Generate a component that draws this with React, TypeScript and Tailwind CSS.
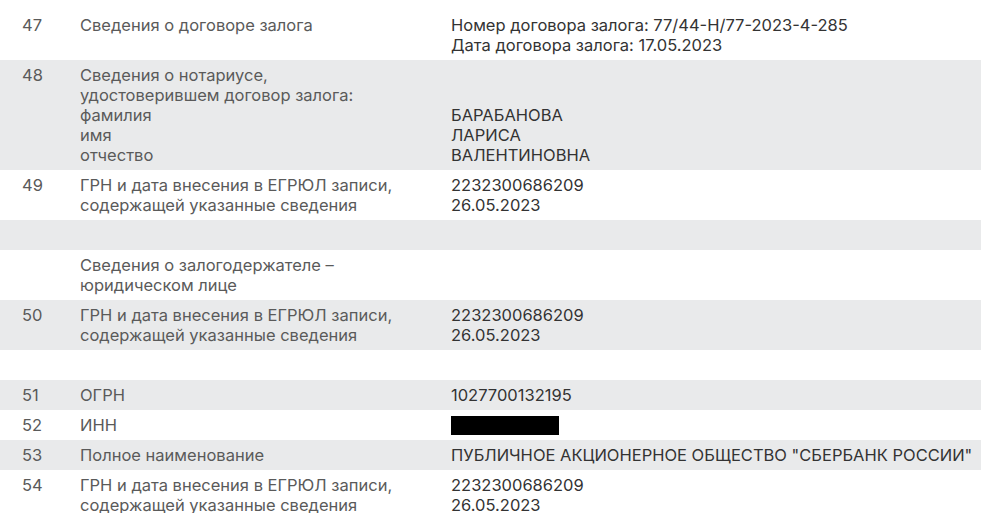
import React from "react";

type Row = { n?: string; label: string[]; value: string[]; pt?: string; redact?: boolean };

const rows: Row[] = [
  {
    n: "47",
    label: ["Сведения о договоре залога"],
    value: ["Номер договора залога: 77/44-Н/77-2023-4-285", "Дата договора залога: 17.05.2023"],
    pt: "pt-[15px]",
  },
  {
    n: "48",
    label: ["Сведения о нотариусе,", "удостоверившем договор залога:", "фамилия", "имя", "отчество"],
    value: ["\u00a0", "\u00a0", "БАРАБАНОВА", "ЛАРИСА", "ВАЛЕНТИНОВНА"],
  },
  {
    n: "49",
    label: ["ГРН и дата внесения в ЕГРЮЛ записи,", "содержащей указанные сведения"],
    value: ["2232300686209", "26.05.2023"],
  },
  { label: ["\u00a0"], value: [] },
  { label: ["Сведения о залогодержателе –", "юридическом лице"], value: [] },
  {
    n: "50",
    label: ["ГРН и дата внесения в ЕГРЮЛ записи,", "содержащей указанные сведения"],
    value: ["2232300686209", "26.05.2023"],
  },
  { label: ["\u00a0"], value: [] },
  { n: "51", label: ["ОГРН"], value: ["1027700132195"] },
  { n: "52", label: ["ИНН"], value: [], redact: true },
  { n: "53", label: ["Полное наименование"], value: ['ПУБЛИЧНОЕ АКЦИОНЕРНОЕ ОБЩЕСТВО "СБЕРБАНК РОССИИ"'] },
  {
    n: "54",
    label: ["ГРН и дата внесения в ЕГРЮЛ записи,", "содержащей указанные сведения"],
    value: ["2232300686209", "26.05.2023"],
  },
];

export default function App() {
  return (
    <div
      className="w-[981px] h-[513px] overflow-hidden bg-white text-[16.5px] leading-[20px]"
      style={{ fontFamily: "Inter, 'Noto Sans', sans-serif" }}
    >
      {rows.map((r, i) => (
        <div
          key={i}
          className={`flex ${r.pt ?? "pt-[5px]"} pb-[5px] ${i % 2 === 1 ? "bg-[#e9eaeb]" : "bg-white"}`}
        >
          <div className="w-[80px] shrink-0 pl-[22px] text-[#5a5a5a]">{r.n ?? "\u00a0"}</div>
          <div className="w-[371px] shrink-0 text-[#5a5a5a] whitespace-nowrap">
            {r.label.map((l, j) => (
              <div key={j}>{l}</div>
            ))}
          </div>
          <div className="flex-1 text-[#333333] whitespace-nowrap">
            {r.redact ? (
              <div className="h-[20px] flex items-center">
                <div className="w-[108px] h-[19px] bg-black" />
              </div>
            ) : (
              r.value.map((v, j) => <div key={j}>{v}</div>)
            )}
          </div>
        </div>
      ))}
    </div>
  );
}
